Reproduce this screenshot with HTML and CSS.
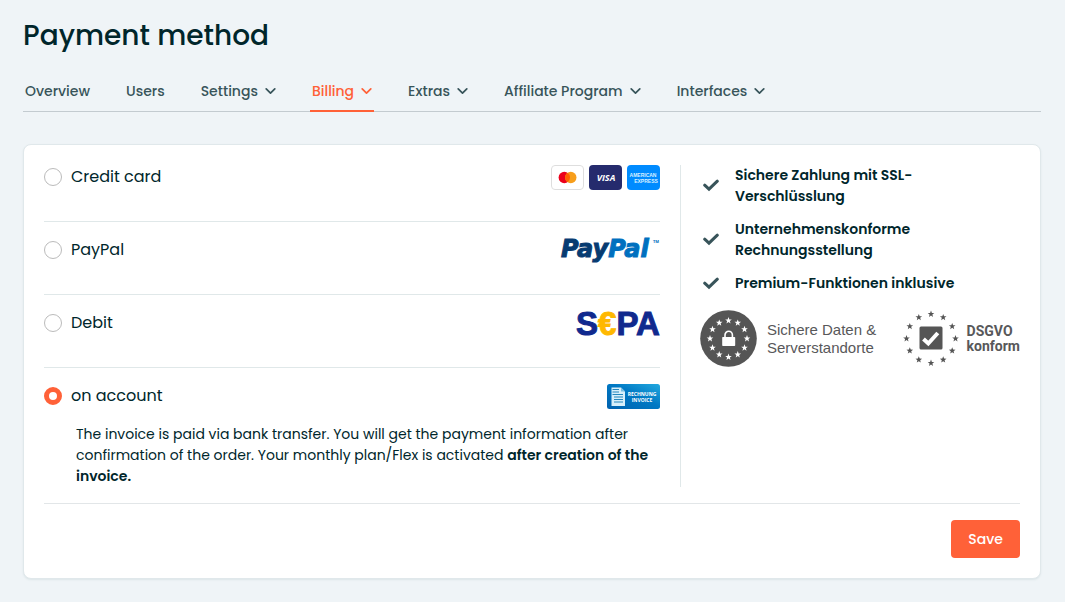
FILE: index.html
```html
<!DOCTYPE html>
<html lang="en">
<head>
<meta charset="utf-8">
<meta name="viewport" content="width=device-width, initial-scale=1">
<title>Payment method</title>
<link rel="stylesheet" href="styles.css">
</head>
<body>
<svg class="defs" aria-hidden="true">
  <symbol id="chevron" viewBox="0 0 11 8"><path d="M1.200 1.800 5.500 6.200l4.300-4.400" fill="none" stroke="currentColor" stroke-width="1.700" stroke-linecap="round" stroke-linejoin="round"/></symbol>
  <symbol id="check" viewBox="0 0 16 14"><path d="M1.700 6.200 6 10.200 14.300 2.200" fill="none" stroke="currentColor" stroke-width="3" stroke-linecap="round"/></symbol>
  <path id="star" d="M0-3.400 .9-1.100 3.300-1 1.400.5 2 2.900 0 1.500-2 2.900-1.400.5-3.300-1-.9-1.100Z"/>
</svg>
<main class="page">
  <h1 class="title">Payment method</h1>
  <nav class="tabs">
    <a class="tab" href="#">Overview</a>
    <a class="tab" href="#">Users</a>
    <a class="tab" href="#">Settings <svg class="chevron"><use href="#chevron"/></svg></a>
    <a class="tab tab-active" href="#" aria-current="page">Billing <svg class="chevron"><use href="#chevron"/></svg></a>
    <a class="tab" href="#">Extras <svg class="chevron"><use href="#chevron"/></svg></a>
    <a class="tab" href="#">Affiliate Program <svg class="chevron"><use href="#chevron"/></svg></a>
    <a class="tab" href="#">Interfaces <svg class="chevron"><use href="#chevron"/></svg></a>
  </nav>
  <form class="card">
    <div class="columns">
      <div class="methods">
        <div class="method">
          <div class="method-head">
            <input class="radio" type="radio" name="method" id="credit">
            <label class="method-label" for="credit">Credit card</label>
            <span class="logos">
              <svg width="33" height="25" viewBox="0 0 33 25" role="img" aria-label="Mastercard"><rect x=".5" y=".5" width="32" height="24" rx="3.500" fill="#fff" stroke="#dedede"/><circle cx="13.300" cy="12.500" r="5.700" fill="#eb001b"/><circle cx="19.800" cy="12.500" r="5.700" fill="#f79e1b"/><path d="M16.550 7.800a5.700 5.700 0 0 1 0 9.400 5.700 5.700 0 0 1 0-9.400Z" fill="#ff5f00"/></svg>
              <svg width="33" height="25" viewBox="0 0 33 25" role="img" aria-label="Visa"><rect width="33" height="25" rx="4" fill="#252b6d"/><text class="visa" x="17" y="16">VISA</text></svg>
              <svg width="33" height="25" viewBox="0 0 33 25" role="img" aria-label="American Express"><rect width="33" height="25" rx="4" fill="#008bff"/><g class="amex"><text x="16" y="12">AMERICAN</text><text x="19" y="18">EXPRESS</text></g></svg>
            </span>
          </div>
        </div>
        <div class="method">
          <div class="method-head">
            <input class="radio" type="radio" name="method" id="paypal">
            <label class="method-label" for="paypal">PayPal</label>
            <svg class="logo" width="99" height="25" viewBox="0 0 99 25" role="img" aria-label="PayPal"><text class="paypal" x="0" y="19"><tspan fill="#073b71" stroke="#073b71">Pay</tspan><tspan fill="#0070bf" stroke="#0070bf">Pal</tspan></text><text class="tm" x="92" y="5">TM</text></svg>
          </div>
        </div>
        <div class="method">
          <div class="method-head">
            <input class="radio" type="radio" name="method" id="debit">
            <label class="method-label" for="debit">Debit</label>
            <svg class="logo" width="84" height="25" viewBox="0 0 84 25" role="img" aria-label="SEPA"><text class="sepa" x="0" y="24">S<tspan fill="#ffb800" stroke="#ffb800">€</tspan>PA</text></svg>
          </div>
        </div>
        <div class="method">
          <div class="method-head">
            <input class="radio" type="radio" name="method" id="account" checked>
            <label class="method-label" for="account">on account</label>
            <svg width="53" height="25" viewBox="0 0 53 25" role="img" aria-label="Rechnung / Invoice">
              <defs><linearGradient id="blue" x1="0" y1="1" x2="1" y2="0"><stop offset="0" stop-color="#0062af"/><stop offset=".55" stop-color="#0079c4"/><stop offset="1" stop-color="#23a9df"/></linearGradient></defs>
              <rect width="53" height="25" rx="2.500" fill="url(#blue)"/>
              <path d="M4.500 3.500H14l4 4v14.500H4.500Z" fill="#d7effa"/><path d="M14 3.500v4h4Z" fill="#78bde2"/>
              <path d="M5.500 5.500H12M5.500 8H12M5.500 10.500H16M7 13h9M7 15.500h9M7 18h9" stroke="#2587bd"/>
              <g class="invoice"><text x="35" y="12">RECHNUNG</text><text x="35" y="18">INVOICE</text></g>
            </svg>
          </div>
          <p class="details">The invoice is paid via bank transfer. You will get the payment information after confirmation of the order. Your monthly plan/Flex is activated <strong>after creation of the invoice.</strong></p>
        </div>
      </div>
      <aside class="benefits">
        <ul class="benefit-list">
          <li class="benefit"><svg class="check"><use href="#check"/></svg><span>Sichere Zahlung mit SSL-Verschlüsslung</span></li>
          <li class="benefit"><svg class="check"><use href="#check"/></svg><span>Unternehmenskonforme Rechnungsstellung</span></li>
          <li class="benefit"><svg class="check"><use href="#check"/></svg><span>Premium-Funktionen inklusive</span></li>
        </ul>
        <div class="badges">
          <div class="badge">
            <svg width="57" height="57" viewBox="-28.5 -28.5 57 57" aria-hidden="true"><circle r="28.300" fill="#555"/>
              <g fill="#fff"><use href="#star" y="-18"/><use href="#star" x="9.250" y="-15.700"/><use href="#star" x="16" y="-9.250"/><use href="#star" x="18.500"/><use href="#star" x="16" y="9.250"/><use href="#star" x="9.250" y="16"/><use href="#star" y="18.500"/><use href="#star" x="-9.250" y="16"/><use href="#star" x="-16" y="9.250"/><use href="#star" x="-18.500"/><use href="#star" x="-16" y="-9.250"/><use href="#star" x="-9.250" y="-15.700"/><rect x="-6.300" y="-1.500" width="13" height="9" rx=".7"/></g>
              <path d="M-3.500-1v-2.500a3.700 3.700 0 0 1 7.400 0V-1" fill="none" stroke="#fff" stroke-width="1.600"/></svg>
            <span class="badge-secure">Sichere Daten &amp;<br>Serverstandorte</span>
          </div>
          <div class="badge badge-tight">
            <svg width="56" height="57" viewBox="-28 -28.5 56 57" aria-hidden="true"><g fill="#555"><use href="#star" y="-24.500"/><use href="#star" x="12.200" y="-21.200"/><use href="#star" x="21.200" y="-12.200"/><use href="#star" x="24.500"/><use href="#star" x="21.200" y="12.200"/><use href="#star" x="12.200" y="21.200"/><use href="#star" y="24.500"/><use href="#star" x="-12.200" y="21.200"/><use href="#star" x="-21.200" y="12.200"/><use href="#star" x="-24.500"/><use href="#star" x="-21.200" y="-12.200"/><use href="#star" x="-12.200" y="-21.200"/><rect x="-11.500" y="-12" width="23" height="23" rx="1.500"/></g><path d="M-7.500.5-2.700 5 6.800-5.500" fill="none" stroke="#fff" stroke-width="4"/></svg>
            <span class="badge-privacy">DSGVO<br>konform</span>
          </div>
        </div>
      </aside>
    </div>
    <div class="actions"><button class="save" type="button">Save</button></div>
  </form>
</main>
</body>
</html>
```
FILE: styles.css
```css
* { box-sizing: border-box; }
body {
  margin: 0;
  background: #eff4f7;
  color: #00262b;
  font: 14px/21px Poppins, Inter, sans-serif;
}
.defs { position: absolute; width: 0; height: 0; }
.page { padding: 15px 24px 23px 23px; }
.title { margin: 0; font-size: 28px; line-height: 42px; font-weight: 500; }
.tabs {
  display: flex;
  gap: 32px;
  margin-top: 13px;
  border-bottom: 1px solid #c3cbd0;
}
.tab {
  display: flex;
  align-items: center;
  gap: 7px;
  height: 42px;
  margin-bottom: -1px;
  padding: 2px 2px 0;
  border-bottom: 2px solid transparent;
  color: #38545a;
  font-weight: 500;
  text-decoration: none;
  white-space: nowrap;
}
.tab-active { color: #ff6138; border-color: #ff6138; }
.chevron { width: 11px; height: 8px; }
.card {
  margin-top: 32px;
  padding: 20px;
  border: 1px solid #e0e8eb;
  border-radius: 8px;
  background: #fff;
  box-shadow: 0 1px 2px #dce5e8;
}
.columns { display: grid; grid-template-columns: minmax(0, 616fr) minmax(0, 360fr); }
.method { padding: 16px 0 31px; border-bottom: 1px solid #e0e8e9; }
.method:first-child { padding-top: 0; }
.method:last-child { padding-bottom: 0; border-bottom: 0; }
.method-head { display: flex; align-items: flex-start; gap: 9px; height: 25px; }
.method-label { flex: 1; font-size: 16px; line-height: 24px; }
.radio {
  appearance: none;
  width: 18px;
  height: 18px;
  margin: 3px 0 0;
  border: 1px solid #bbb;
  border-radius: 50%;
  background: #fff;
}
.radio:checked { border: 5px solid #ff6138; }
.logos { display: flex; gap: 5px; }
.logo { overflow: visible; }
.details { margin: 15px 0 0; padding-left: 32px; }
.details strong { font-weight: 600; }
.visa { font: italic 700 9px "Open Sans", sans-serif; fill: #fff; text-anchor: middle; }
.amex { font: 700 5px "Liberation Sans", sans-serif; fill: #d9efff; text-anchor: middle; }
.paypal { font: italic 700 24px "DejaVu Sans", sans-serif; stroke-width: 1px; }
.tm { font: 700 4px "Open Sans", sans-serif; fill: #0070bf; }
.sepa { font: 700 33px "Liberation Sans", sans-serif; fill: #10298e; stroke: #10298e; stroke-width: 1px; }
.invoice { font: 700 5px "Open Sans", sans-serif; fill: #fff; text-anchor: middle; }
.benefits { margin-left: 20px; padding-left: 19px; border-left: 1px solid #e0e8e9; }
.benefit-list {
  display: grid;
  gap: 12px;
  margin: 0;
  padding: 0 40px 0 3px;
  list-style: none;
  font-weight: 600;
}
.benefit { display: flex; align-items: center; gap: 16px; }
.check { flex: none; width: 16px; height: 14px; color: #38545a; }
.badges { display: flex; justify-content: space-between; margin-top: 16px; }
.badge { display: flex; align-items: center; gap: 10px; white-space: nowrap; color: #58585a; }
.badge-tight { gap: 8px; }
.badge-secure { font: 15px/18px "Liberation Sans", sans-serif; }
.badge-privacy { font: 700 14px/15px Roboto, sans-serif; }
.actions {
  display: flex;
  justify-content: flex-end;
  margin-top: 16px;
  padding-top: 16px;
  border-top: 1px solid #e2e6e8;
}
.save {
  height: 38px;
  padding: 0 17px;
  border: 0;
  border-radius: 4px;
  background: #ff6138;
  color: #fff;
  font: inherit;
  font-weight: 500;
}
```
